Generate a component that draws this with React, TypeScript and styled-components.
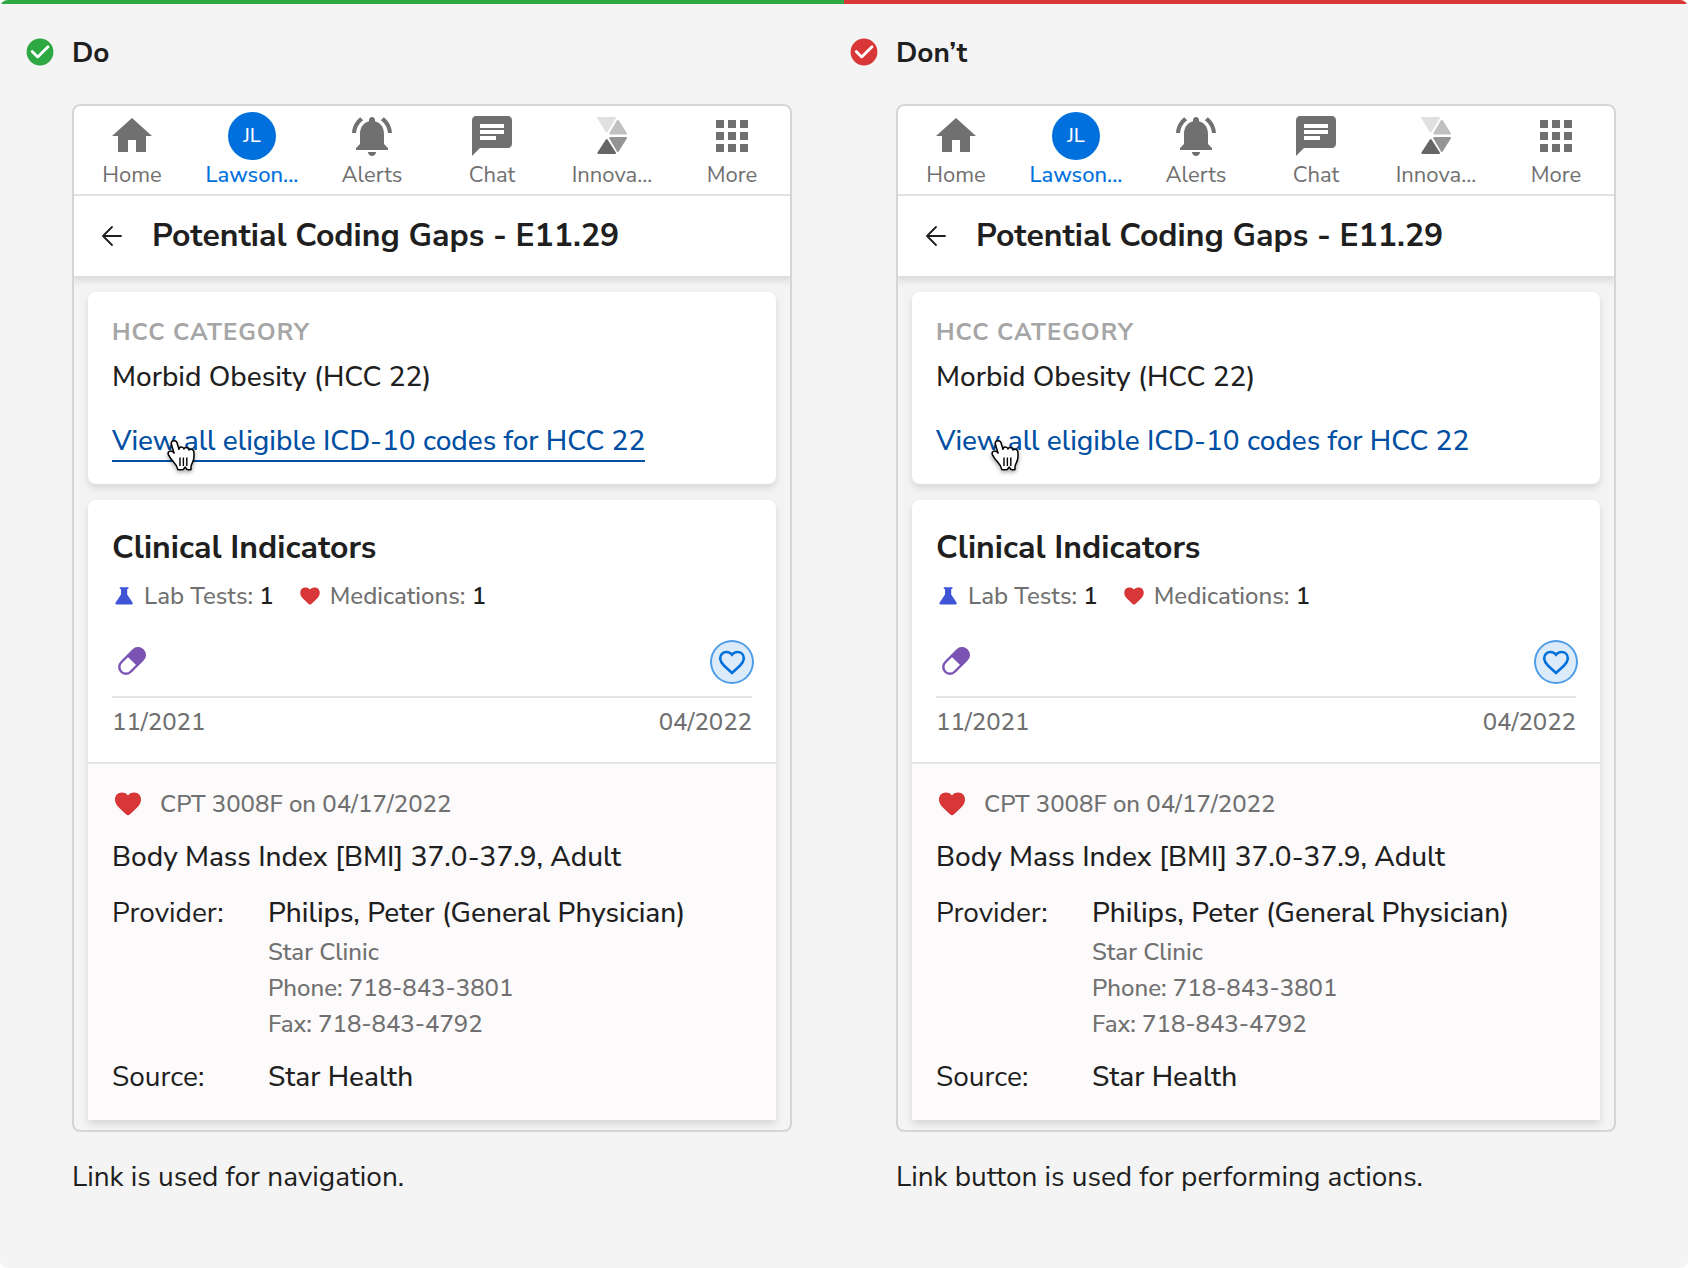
import React from "react";
import styled, { createGlobalStyle } from "styled-components";

const color = {
  ink: "#1f1f1f",
  muted: "#707070",
  faint: "#a6a6a6",
  line: "#e5e5e5",
  frame: "#d5d5d5",
  stone: "#f4f4f4",
  blue: "#0070dd",
  link: "#004fa3",
  success: "#2ea843",
  alert: "#d93737",
  jal: "#3e55d6",
  lavender: "#7a53b3",
};

const GlobalStyle = createGlobalStyle`
  *, *::before, *::after { box-sizing: border-box; }
  body {
    margin: 0;
    background: #ffffff;
    color: ${color.ink};
    font-family: "Nunito Sans", Lato, "Open Sans", sans-serif;
    font-size: 28px;
    line-height: 42px;
  }
  h2, h3, h4, p, dl, dd { margin: 0; }
  button { font: inherit; color: inherit; background: none; border: 0; padding: 0; cursor: pointer; }
`;

const Page = styled.main`
  min-height: 100vh;
  display: grid;
  grid-template-rows: 4px 1fr;
  background: ${color.stone};
  border-radius: 8px;
  overflow: hidden;
`;

const Stripes = styled.div`
  display: grid;
  grid-template-columns: 1fr 1fr;
`;

const Stripe = styled.span<{ $tone: string }>`
  background: ${(p) => p.$tone};
`;

const Columns = styled.div`
  display: grid;
  grid-template-columns: repeat(2, minmax(0, 1fr));
  align-items: start;
  gap: 56px;
  padding: 28px 72px 64px 24px;
`;

const Example = styled.section`
  display: grid;
  grid-template-columns: 32px minmax(0, 1fr);
  column-gap: 16px;
`;

const Verdict = styled.h2`
  font-size: 28px;
  font-weight: 700;
`;

const StatusIcon = styled.svg`
  width: 32px;
  height: 32px;
  margin-top: 4px;
`;

const Body = styled.div`
  grid-column: 2;
  display: grid;
  gap: 24px;
  padding-top: 30px;
`;

const Phone = styled.article`
  outline: 2px solid ${color.frame};
  outline-offset: -2px;
  border-radius: 8px;
  overflow: hidden;
  padding-bottom: 12px;
`;

const Nav = styled.nav`
  display: grid;
  grid-template-columns: repeat(6, minmax(0, 1fr));
  padding: 8px 0 4px;
  background: #ffffff;
  border-bottom: 2px solid ${color.line};
`;

const NavItem = styled.a<{ $active?: boolean }>`
  display: flex;
  flex-direction: column;
  align-items: center;
  font-size: 22px;
  font-weight: ${(p) => (p.$active ? 500 : 400)};
  line-height: 30px;
  text-decoration: none;
  color: ${(p) => (p.$active ? color.blue : color.muted)};
`;

const NavIcon = styled.svg`
  width: 48px;
  height: 48px;
  fill: currentColor;
`;

const Avatar = styled.span`
  display: grid;
  place-items: center;
  width: 48px;
  height: 48px;
  border-radius: 50%;
  background: ${color.blue};
  color: #ffffff;
  font-size: 20px;
`;

const Header = styled.header`
  display: flex;
  align-items: center;
  gap: 24px;
  height: 80px;
  padding: 0 24px;
  background: #ffffff;
  box-shadow: 0 4px 8px rgba(0, 0, 0, 0.12);
`;

const Title = styled.h3`
  font-size: 32px;
  font-weight: 700;
  line-height: 48px;
`;

const BackButton = styled.button`
  display: grid;
  place-items: center;
  width: 32px;
  height: 32px;
`;

const Cards = styled.div`
  display: grid;
  gap: 16px;
  padding: 16px 16px 0;
`;

const Card = styled.section<{ $open?: boolean }>`
  background: #ffffff;
  border-radius: ${(p) => (p.$open ? "8px 8px 0 0" : "8px")};
  box-shadow: 0 4px 8px rgba(0, 0, 0, 0.12);
`;

const CardSection = styled.div<{ $tinted?: boolean }>`
  padding: 24px 24px 22px;
  background: ${(p) => (p.$tinted ? "#fcfafb" : "transparent")};
  border-top: ${(p) => (p.$tinted ? `2px solid ${color.line}` : "0")};
`;

const Overline = styled.h4`
  font-size: 24px;
  font-weight: 700;
  line-height: 32px;
  letter-spacing: 1px;
  text-transform: uppercase;
  color: ${color.faint};
`;

const Strong = styled.p`
  font-weight: 500;
`;

const Category = styled(Strong)`
  margin: 8px 0 22px;
`;

const Action = styled.div`
  position: relative;
  display: flex;
`;

const CodesLink = styled.a`
  font-weight: 500;
  color: ${color.link};
  text-decoration: none;
  box-shadow: inset 0 -2px 0 ${color.link};
`;

const CodesButton = styled.button`
  font-weight: 500;
  color: ${color.link};
`;

const Pointer = styled.svg`
  position: absolute;
  left: 52px;
  top: 18px;
  width: 34px;
  height: 38px;
  overflow: visible;
  filter: drop-shadow(0 2px 2px rgba(0, 0, 0, 0.35));
  pointer-events: none;
`;

const Legend = styled.div`
  display: flex;
  gap: 24px;
  margin-top: 8px;
`;

const Small = styled.span`
  font-size: 24px;
  font-weight: 500;
  line-height: 32px;
  color: ${color.muted};
`;

const LegendItem = styled(Small)`
  display: flex;
  align-items: center;
  gap: 8px;
`;

const Count = styled.span`
  font-weight: 600;
  color: ${color.ink};
`;

const Timeline = styled.div`
  display: flex;
  justify-content: space-between;
  align-items: center;
  padding: 30px 0 14px;
  border-bottom: 2px solid ${color.line};
`;

const EventButton = styled.button<{ $selected?: boolean }>`
  display: grid;
  place-items: center;
  width: 40px;
  height: 40px;
  border-radius: 50%;
  background: ${(p) => (p.$selected ? "#dcebf9" : "transparent")};
  box-shadow: ${(p) => (p.$selected ? "0 0 0 2px #4f9eea" : "none")};
`;

const Dates = styled.div`
  display: flex;
  justify-content: space-between;
  padding: 8px 0 2px;
`;

const Record = styled.div`
  display: flex;
  align-items: center;
  gap: 16px;
  margin-bottom: 16px;
`;

const Details = styled.dl`
  display: grid;
  grid-template-columns: 156px minmax(0, 1fr);
  row-gap: 16px;
  margin-top: 14px;
`;

const Value = styled.dd`
  display: grid;
`;

const Contact = styled.div`
  display: grid;
  gap: 4px;
  padding-top: 2px;
`;

const HEART =
  "M16 7.4C17.8 5.2 20 4.6 22.3 4.6c4 0 6.7 3 6.7 6.9 0 3.6-1.8 6.1-4.6 8.8l-6.6 6.2c-1.1 1-2.5 1-3.6 0l-6.600-6.200C4.800 17.600 3 15.100 3 11.500c0-3.900 2.700-6.900 6.700-6.900 2.300 0 4.500.6 6.300 2.800z";

function RoundHeart({ size }: { size: number }) {
  return (
    <svg width={size} height={size} viewBox="0 0 32 32" aria-hidden="true">
      <path fill={color.alert} d={HEART} />
    </svg>
  );
}

function Flask() {
  return (
    <svg width="24" height="24" viewBox="0 0 24 24" aria-hidden="true">
      <path
        fill={color.jal}
        d="M7.800 3.300h8.600v1.700h-1.200v5.600l5.300 8c.7 1.200.2 2-1 2H4.700c-1.200 0-1.700-.8-1-2l5.300-8V5H7.800z"
      />
    </svg>
  );
}

function Pill() {
  return (
    <svg width="40" height="40" viewBox="0 0 40 40" aria-hidden="true">
      <g transform="rotate(45 20 19)">
        <rect x="13.300" y="3.800" width="13.400" height="30.400" rx="6.700" fill="#ffffff" stroke={color.lavender} strokeWidth="2.400" />
        <path d="M12.400 19V10.500a7.600 7.600 0 0 1 15.200 0V19z" fill={color.lavender} />
      </g>
    </svg>
  );
}

function Hand() {
  return (
    <Pointer viewBox="0 0 34 38" aria-hidden="true">
      <path
        d="M9.700 2.800c1.700-.4 3 .6 3.500 2.400l1.700 6.100c.2-1.600 1-2.400 2.300-2.400 1.500 0 2.400.8 2.700 2 .4-.9 1.200-1.300 2.300-1.300 1.500 0 2.500.8 2.800 2.300.5-.5 1.200-.8 2-.7 2 .1 3 1.600 3 3.700v3.400c0 2.600-.6 4.600-1.600 6.500-.9 1.700-1.400 2.600-1.400 4.200v2.600c-1.200.3-2.600.3-3.800 0-.8-.8-1.300-1.800-2-2.500-.8.8-1.200 1.700-2.100 2.500-1.800.2-3.600.2-5.200 0-.8-2.900-2.400-5.600-4.700-8-1.900-2-3.300-3.900-4.700-6.700-1-2 .2-4 2.200-4 1.300 0 2.400.8 3.400 2.300L8 8.200c-.4-1.500-.8-2.700-.7-3.400.1-1.100 1-1.700 2.400-2z"
        fill="#ffffff"
        stroke="#000000"
        strokeWidth="1.500"
        strokeLinejoin="round"
      />
      <path d="M16 19.500v8.500M19.400 19.500v8.500M22.800 19.500v8.500" stroke="#000000" strokeWidth="1.400" />
    </Pointer>
  );
}

const NAV = [
  { label: "Home", path: "M10 20v-6h4v6h5v-8h3L12 3 2 12h3v8z" },
  { label: "Lawson...", initials: "JL" },
  {
    label: "Alerts",
    path: "M7.580 4.080L6.150 2.650C3.750 4.480 2.170 7.300 2.030 10.500h2c.15-2.650 1.510-4.970 3.550-6.420zm12.390 6.420h2c-.15-3.200-1.730-6.020-4.120-7.850l-1.420 1.430c2.020 1.450 3.390 3.770 3.540 6.420zM18 11c0-3.070-1.640-5.640-4.500-6.320V4c0-.83-.67-1.500-1.500-1.500s-1.500.67-1.500 1.500v.68C7.630 5.360 6 7.920 6 11v5l-2 2v1h16v-1l-2-2v-5zm-6 11c.14 0 .27-.01.4-.04.65-.14 1.180-.58 1.440-1.180.1-.24.15-.5.15-.78h-4c.01 1.100.9 2 2.010 2z",
  },
  {
    label: "Chat",
    path: "M20 2H4c-1.100 0-1.990.9-1.990 2L2 22l4-4h14c1.100 0 2-.9 2-2V4c0-1.100-.9-2-2-2zM6 9h12v2H6V9zm8 5H6v-2h8v2zm4-6H6V6h12v2z",
  },
  { label: "Innova...", logo: true },
  {
    label: "More",
    path: "M4 8h4V4H4v4zm6 12h4v-4h-4v4zm-6 0h4v-4H4v4zm0-6h4v-4H4v4zm6 0h4v-4h-4v4zm6-10v4h4V4h-4zm-6 4h4V4h-4v4zm6 6h4v-4h-4v4zm0 6h4v-4h-4v4z",
  },
];

const LOGO = [
  { tone: "#e0e0e0", points: "10.300,6 27,6 18.700,19.600" },
  { tone: "#c0c0c0", points: "29.800,8.700 22.300,21.500 38,21.500" },
  { tone: "#949494", points: "22.300,26 38,26 29.800,39" },
  { tone: "#666666", points: "18.700,28 10.300,41 27,41" },
];

function NavBar() {
  return (
    <Nav>
      {NAV.map((item) => (
        <NavItem key={item.label} href="#" $active={!!item.initials}>
          {item.initials && <Avatar>{item.initials}</Avatar>}
          {item.path && (
            <NavIcon viewBox="0 0 24 24" aria-hidden="true">
              <path d={item.path} />
            </NavIcon>
          )}
          {item.logo && (
            <NavIcon viewBox="0 0 48 48" aria-hidden="true">
              {LOGO.map((t) => (
                <polygon key={t.tone} points={t.points} fill={t.tone} stroke={t.tone} strokeWidth="2" strokeLinejoin="round" />
              ))}
            </NavIcon>
          )}
          {item.label}
        </NavItem>
      ))}
    </Nav>
  );
}

function Device({ action }: { action: React.ReactNode }) {
  return (
    <Phone>
      <NavBar />
      <Header>
        <BackButton aria-label="Back">
          <svg width="32" height="32" viewBox="0 0 32 32" fill="none" stroke={color.ink} strokeWidth="1.800" strokeLinecap="round" strokeLinejoin="round" aria-hidden="true">
            <path d="M25 16H7M16 7l-9 9 9 9" />
          </svg>
        </BackButton>
        <Title>Potential Coding Gaps - E11.29</Title>
      </Header>
      <Cards>
        <Card>
          <CardSection>
            <Overline>HCC Category</Overline>
            <Category>Morbid Obesity (HCC 22)</Category>
            <Action>
              {action}
              <Hand />
            </Action>
          </CardSection>
        </Card>
        <Card $open>
          <CardSection>
            <Title as="h4">Clinical Indicators</Title>
            <Legend>
              <LegendItem>
                <Flask />
                <span>
                  Lab Tests: <Count>1</Count>
                </span>
              </LegendItem>
              <LegendItem>
                <RoundHeart size={24} />
                <span>
                  Medications: <Count>1</Count>
                </span>
              </LegendItem>
            </Legend>
            <Timeline>
              <EventButton aria-label="Lab test, 11/2021">
                <Pill />
              </EventButton>
              <EventButton aria-label="Medication, 04/2022" $selected>
                <svg width="32" height="32" viewBox="0 0 32 32" aria-hidden="true">
                  <path
                    d="M16 8.700c1.700-2 3.500-2.700 5.600-2.700 3.600 0 6.200 2.700 6.200 6.300 0 3.200-1.900 5.400-4.500 8L16 27l-7.300-6.700c-2.600-2.600-4.500-4.800-4.500-8 0-3.600 2.600-6.300 6.200-6.300 2.100 0 3.900.7 5.600 2.700z"
                    fill="none"
                    stroke={color.blue}
                    strokeWidth="2.600"
                  />
                </svg>
              </EventButton>
            </Timeline>
            <Dates>
              <Small>11/2021</Small>
              <Small>04/2022</Small>
            </Dates>
          </CardSection>
          <CardSection $tinted>
            <Record>
              <RoundHeart size={32} />
              <Small>CPT 3008F on 04/17/2022</Small>
            </Record>
            <Strong>Body Mass Index [BMI] 37.0-37.9, Adult</Strong>
            <Details>
              <dt>Provider:</dt>
              <Value>
                <Strong>Philips, Peter (General Physician)</Strong>
                <Contact>
                  <Small>Star Clinic</Small>
                  <Small>Phone: 718-843-3801</Small>
                  <Small>Fax: 718-843-4792</Small>
                </Contact>
              </Value>
              <dt>Source:</dt>
              <Value>
                <Strong>Star Health</Strong>
              </Value>
            </Details>
          </CardSection>
        </Card>
      </Cards>
    </Phone>
  );
}

interface GuidelineProps {
  verdict: string;
  tone: string;
  caption: string;
  action: React.ReactNode;
}

function Guideline({ verdict, tone, caption, action }: GuidelineProps) {
  return (
    <Example>
      <StatusIcon viewBox="0 0 32 32" aria-hidden="true">
        <circle cx="16" cy="16" r="13.400" fill={tone} />
        <path d="M8.200 15.500l5.500 5.500L24 10.800" fill="none" stroke="#ffffff" strokeWidth="2.800" strokeLinecap="round" strokeLinejoin="round" />
      </StatusIcon>
      <Verdict>{verdict}</Verdict>
      <Body>
        <Device action={action} />
        <p>{caption}</p>
      </Body>
    </Example>
  );
}

const LINK_TEXT = "View all eligible ICD-10 codes for HCC 22";

export default function App() {
  return (
    <>
      <GlobalStyle />
      <Page>
        <Stripes>
          <Stripe $tone={color.success} />
          <Stripe $tone={color.alert} />
        </Stripes>
        <Columns>
          <Guideline
            verdict="Do"
            tone={color.success}
            caption="Link is used for navigation."
            action={<CodesLink href="#">{LINK_TEXT}</CodesLink>}
          />
          <Guideline
            verdict="Don’t"
            tone={color.alert}
            caption="Link button is used for performing actions."
            action={<CodesButton>{LINK_TEXT}</CodesButton>}
          />
        </Columns>
      </Page>
    </>
  );
}
